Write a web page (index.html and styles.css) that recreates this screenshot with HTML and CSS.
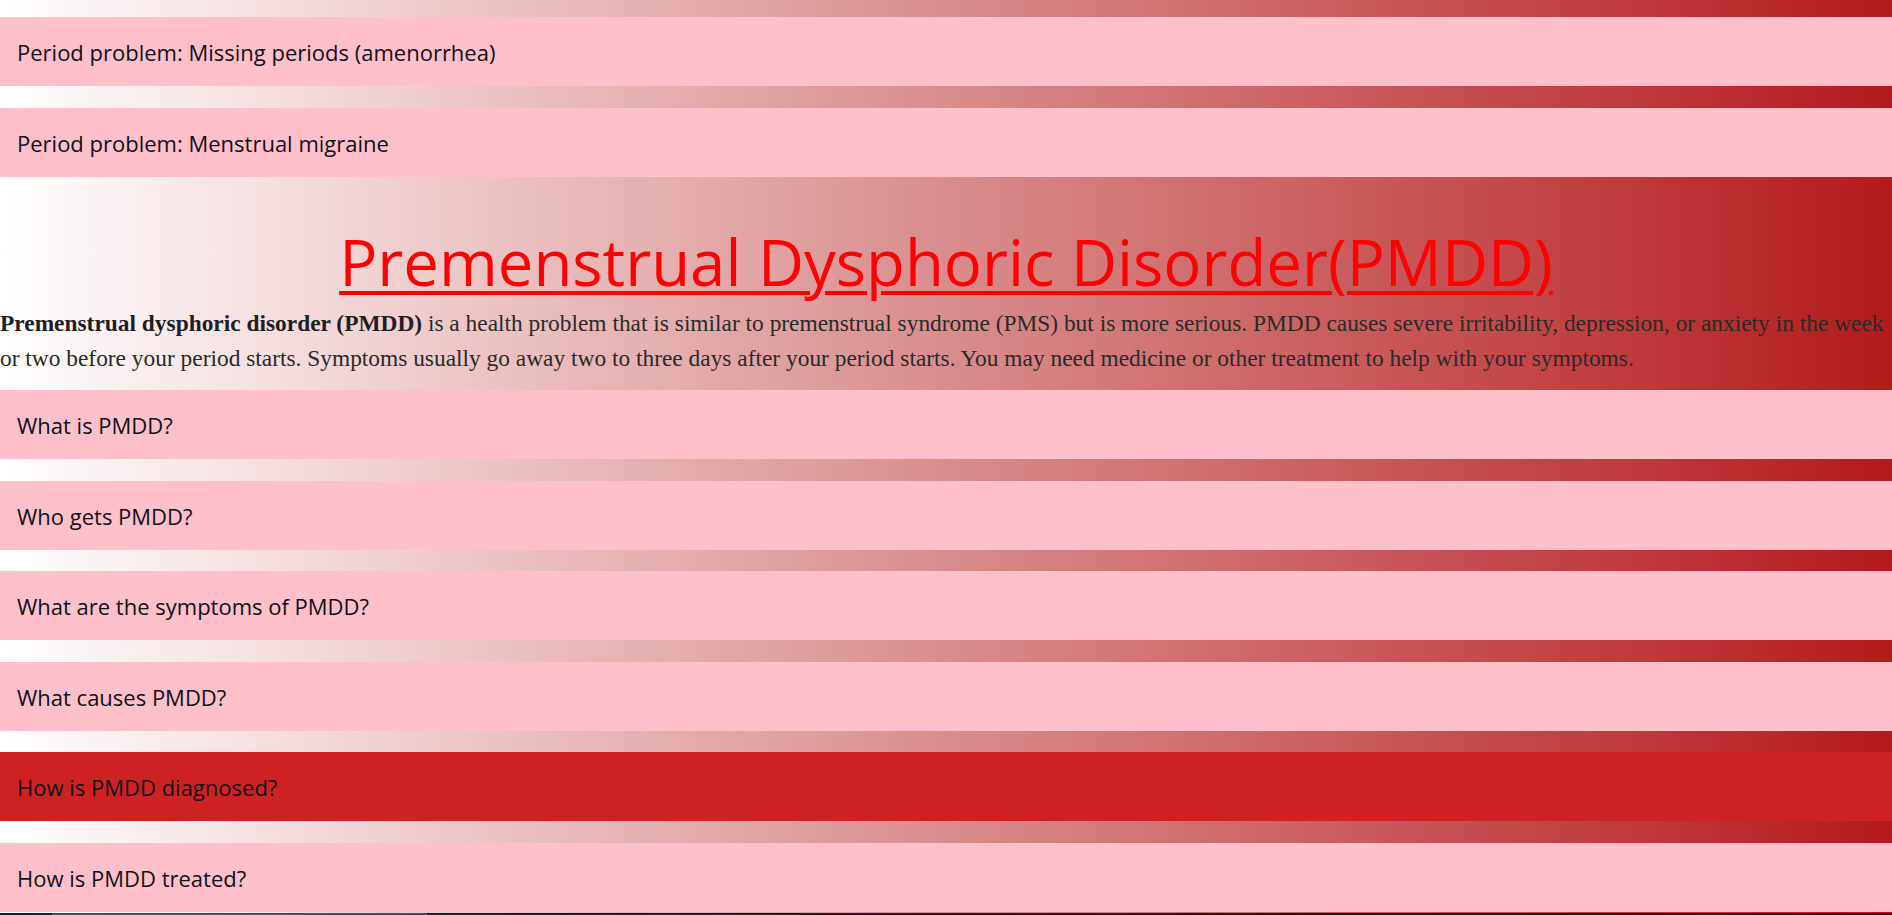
FILE: index.html
```html
<!DOCTYPE html>
<html lang="en">
<head>
<meta charset="utf-8">
<title>PMDD</title>
<link rel="stylesheet" href="styles.css">
</head>
<body>
<main class="page">
  <button class="acc">Period problem: Missing periods (amenorrhea)</button>
  <button class="acc">Period problem: Menstrual migraine</button>
  <section class="intro">
    <h1 class="title"><a class="title-link" href="#pmdd">Premenstrual Dysphoric Disorder(PMDD)</a></h1>
    <p class="lead"><strong>Premenstrual dysphoric disorder (PMDD)</strong> is a health problem that is similar to premenstrual syndrome (PMS) but is more serious. PMDD causes severe irritability, depression, or anxiety in the week or two before your period starts. Symptoms usually go away two to three days after your period starts. You may need medicine or other treatment to help with your symptoms.</p>
  </section>
  <button class="acc">What is PMDD?</button>
  <button class="acc">Who gets PMDD?</button>
  <button class="acc">What are the symptoms of PMDD?</button>
  <button class="acc">What causes PMDD?</button>
  <button class="acc acc-active">How is PMDD diagnosed?</button>
  <button class="acc">How is PMDD treated?</button>
</main>
<div class="hscroll"><div class="hscroll-thumb"></div></div>
</body>
</html>
```

FILE: styles.css
```css
html, body {
  margin: 0;
  padding: 0;
}

body {
  background: linear-gradient(to right, #ffffff 0%, #b41a1c 100%);
  min-height: 915px;
  overflow: hidden;
}

.page {
  display: flex;
  flex-direction: column;
  padding-top: 17px;
}

.acc {
  display: block;
  width: 100%;
  height: 69px;
  margin: 0;
  padding: 21px 17px 19px;
  border: none;
  outline: none;
  background: #ffc0cb;
  color: #111118;
  font-family: "Open Sans", "Noto Sans", sans-serif;
  font-size: 22px;
  line-height: 29px;
  text-align: left;
  cursor: pointer;
  box-sizing: border-box;
  flex: none;
}

.acc + .acc {
  margin-top: 21.6px;
}

.acc-active {
  background: #ce2222;
}

.intro {
  padding: 45px 0 15px;
}

.title {
  margin: 0;
  text-align: center;
  font-family: "Open Sans", "Noto Sans", sans-serif;
  font-weight: 400;
  font-size: 63.5px;
  line-height: 80px;
}

.title-link {
  color: #ff0000;
  text-decoration: underline;
  text-decoration-thickness: 4px;
  text-underline-offset: 5px;
}

.lead {
  margin: 4.5px 0 0;
  font-family: "Liberation Serif", "Times New Roman", serif;
  font-size: 23.4px;
  line-height: 34.5px;
  color: #2a2a2a;
}

.lead strong {
  color: #1e1e24;
}

.hscroll {
  position: fixed;
  left: 0;
  right: 0;
  bottom: 0;
  height: 2px;
  display: flex;
  background: #1d1a2b;
}

.hscroll-thumb {
  margin-left: 52px;
  width: 375px;
  background: #4b4860;
}
```
